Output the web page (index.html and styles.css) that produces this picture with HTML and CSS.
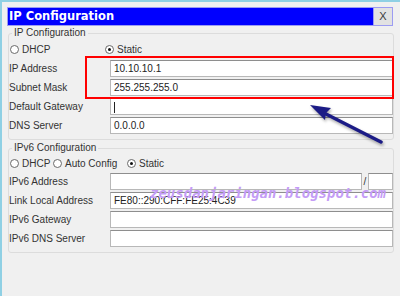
FILE: index.html
```html
<!DOCTYPE html>
<html lang="en">
<head>
    <meta charset="UTF-8">
    <title>IP Configuration</title>
    <link rel="stylesheet" href="styles.css">
</head>
<body>
    <div class="screen">
        <div class="dialog">
            <!-- Barre de titre -->
            <div class="titlebar">
                <div class="title">IP Configuration</div>
                <div class="close">X</div>
            </div>

            <!-- IPv4 -->
            <fieldset class="group ipv4">
                <legend>IP Configuration</legend>
                <div class="modes">
                    <label class="radio opt-dhcp4"><span class="dot"></span>DHCP</label>
                    <label class="radio checked"><span class="dot"></span>Static</label>
                </div>
                <div class="field"><span class="label">IP Address</span><div class="input">10.10.10.1</div></div>
                <div class="field"><span class="label">Subnet Mask</span><div class="input">255.255.255.0</div></div>
                <div class="field"><span class="label">Default Gateway</span><div class="input"><span class="caret"></span></div></div>
                <div class="field"><span class="label">DNS Server</span><div class="input">0.0.0.0</div></div>
            </fieldset>

            <!-- IPv6 -->
            <fieldset class="group ipv6">
                <legend>IPv6 Configuration</legend>
                <div class="modes">
                    <label class="radio opt-dhcp6"><span class="dot"></span>DHCP</label>
                    <label class="radio opt-auto"><span class="dot"></span>Auto Config</label>
                    <label class="radio checked"><span class="dot"></span>Static</label>
                </div>
                <div class="field">
                    <span class="label">IPv6 Address</span>
                    <div class="input"></div>
                    <span class="slash">/</span>
                    <div class="input prefix"></div>
                </div>
                <div class="field"><span class="label">Link Local Address</span><div class="input">FE80::290:CFF:FE25:4C39</div></div>
                <div class="field"><span class="label">IPv6 Gateway</span><div class="input"></div></div>
                <div class="field"><span class="label">IPv6 DNS Server</span><div class="input"></div></div>
            </fieldset>
        </div>

        <!-- Annotations par-dessus la capture -->
        <div class="highlight"></div>
        <svg class="arrow" width="90" height="55" viewBox="0 0 90 55">
            <line x1="24" y1="15" x2="81" y2="44" stroke="#1b1b86" stroke-width="3.5" stroke-linecap="round"/>
            <polygon points="10,7 31,10 26,15 25,22" fill="#1b1b86"/>
        </svg>
        <div class="watermark">zeusdanjaringan.blogspot.com</div>
    </div>
</body>
</html>
```

FILE: styles.css
```css
/* Style général */
body {
    margin: 0;
    background-color: #f0f0f0;
    font-family: "Liberation Sans", Arial, sans-serif;
    font-size: 10px;
    color: #333;
}

.screen {
    position: relative;
    width: 400px;
    height: 296px;
    overflow: hidden;
}

.dialog {
    height: 100%;
    box-sizing: border-box;
    border-top: 2px solid #8fd0e4;
    border-left: 2px solid #8fd0e4;
    padding: 5px 6px 0 5px;
}

/* Barre de titre */
.titlebar {
    display: flex;
    height: 19px;
    box-sizing: border-box;
    margin-right: 1px;
    border: 1px solid #9c9cf2;
}

.title {
    flex: 1;
    background-color: #0000ff;
    color: white;
    font-family: "DejaVu Sans", sans-serif;
    font-weight: bold;
    font-size: 11.5px;
    line-height: 17px;
    padding-left: 1px;
}

.close {
    width: 18px;
    border-left: 1px solid #9c9cf2;
    background-color: #e2e2e2;
    color: #3a3a3a;
    font-size: 11px;
    line-height: 17px;
    text-align: center;
}

/* Groupes */
.group {
    margin: 1px 0 0 1px;
    padding: 0 0 5px 0;
    border: 1px solid #dcdcdc;
    border-radius: 3px;
    min-width: 0;
}

.group legend {
    margin-left: 3px;
    padding: 0 2px;
    line-height: 12px;
}

.ipv6 {
    margin-top: 2px;
}

.modes {
    display: flex;
    align-items: center;
    height: 14px;
    margin: 3px 0 4px 1px;
}

.ipv6 .modes {
    margin: 2px 0 3px 1px;
}

.radio {
    display: flex;
    align-items: center;
}

.opt-dhcp4 {
    width: 95px;
}

.opt-dhcp6 {
    width: 43px;
}

.opt-auto {
    width: 74px;
}

.dot {
    width: 9px;
    height: 9px;
    box-sizing: border-box;
    border: 1px solid #6a6a6a;
    border-radius: 50%;
    background-color: white;
    margin-right: 3px;
    display: flex;
    align-items: center;
    justify-content: center;
}

.checked .dot::after {
    content: "";
    width: 3px;
    height: 3px;
    border-radius: 50%;
    background-color: #111;
}

/* Lignes label + champ */
.field {
    display: flex;
    align-items: center;
    height: 17px;
    margin-bottom: 2px;
}

.field:last-child {
    margin-bottom: 0;
}

.label {
    width: 101px;
    flex-shrink: 0;
}

.input {
    flex: 1;
    height: 17px;
    box-sizing: border-box;
    border: 1px solid #b8b8b8;
    border-top-color: #8e8e8e;
    background-color: white;
    padding-left: 3px;
    line-height: 15px;
    color: #222;
}

.caret {
    display: inline-block;
    width: 1px;
    height: 11px;
    background-color: #222;
    vertical-align: middle;
}

.slash {
    width: 6px;
    text-align: center;
}

.input.prefix {
    flex: 0 0 25px;
}

/* Annotations */
.highlight {
    position: absolute;
    left: 85px;
    top: 56px;
    width: 309px;
    height: 43px;
    box-sizing: border-box;
    border: 2px solid #ff0000;
}

.arrow {
    position: absolute;
    left: 300px;
    top: 98px;
    filter: drop-shadow(1px 2px 1.5px rgba(0, 0, 0, 0.35));
}

.watermark {
    position: absolute;
    left: 150px;
    top: 186px;
    font-family: "DejaVu Sans Mono", monospace;
    font-style: italic;
    font-weight: bold;
    font-size: 14px;
    line-height: 14px;
    color: #c49cf6;
}
```
